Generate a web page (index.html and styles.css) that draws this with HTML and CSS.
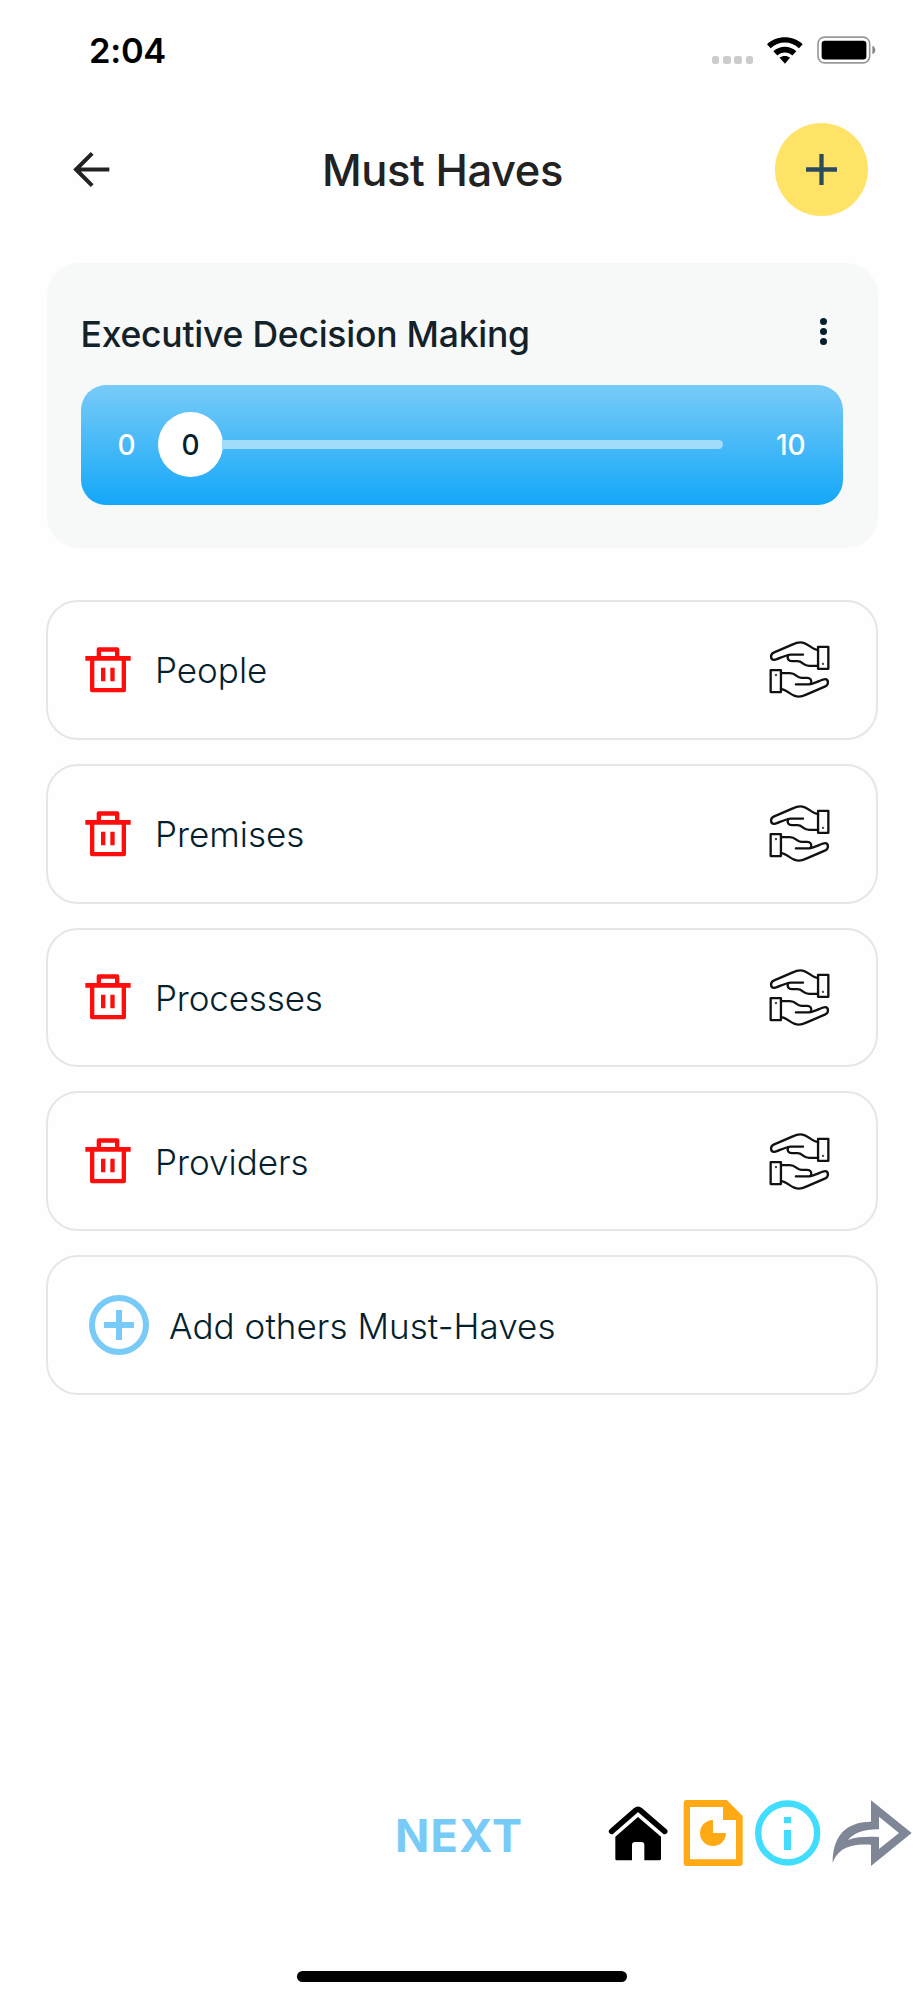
FILE: index.html
```html
<!DOCTYPE html>
<html lang="en">
<head>
<meta charset="utf-8">
<title>Must Haves</title>
<link rel="stylesheet" href="styles.css">
</head>
<body>
<svg width="0" height="0" class="defs" aria-hidden="true">
  <symbol id="trash" viewBox="0 0 138 138">
    <path fill="#ff0d0d" fill-rule="evenodd" d="M35 27V7q0-6 6-6h56q6 0 6 6v20h34v14h-14v89q0 6-6 6H21q-6 0-6-6V41H1V27zM48 27h42V14H48zM28 41v82h82V41zM48 62h13v41H48zM76 62h13v41H76z"/>
  </symbol>
  <symbol id="hands" viewBox="87 150 184 178">
    <g id="hand" fill="none" stroke="#111" stroke-width="7" stroke-linejoin="round" stroke-linecap="round">
      <rect x="235" y="171" width="31" height="66"/>
      <path d="M235 180C214 179 206 157 181 157C173 157 168 159 157 164L101 188C90 193 91 210 102 210C111 210 131 197 151 194H190"/>
      <path d="M145 196C140 207 147 214 156 214H173C189 214 189 228 208 228H235"/>
      <circle cx="250" cy="222" r="1" stroke-width="5"/>
    </g>
    <use href="#hand" transform="rotate(180 179 239)"/>
  </symbol>
</svg>
<div class="screen">
  <header class="status">
    <span class="time">2:04</span>
    <div class="signals">
      <div class="dots"><i></i><i></i><i></i><i></i></div>
      <svg class="wifi" viewBox="262 110 108 80"><path d="M262 131C291 103 340 103 369 131L358 143C334 120 297 120 273 143ZM281 152C300 134 331 134 350 152L338 165C326 153 305 153 293 165ZM300 172C308 165 323 165 331 172L316 190Z"/></svg>
      <svg class="battery" viewBox="412 109 178 84"><rect x="415" y="112" width="156" height="78" rx="20" fill="none" stroke="#999" stroke-width="5"/><rect x="426" y="123" width="135" height="57" rx="10"/><path d="M579 138Q588 142 588 151T579 164Z" fill="#888"/></svg>
    </div>
  </header>
  <nav class="topbar">
    <svg class="back" viewBox="218 454 110 110"><path d="M326 509H230M275 461L227 509L275 557" fill="none" stroke="#222" stroke-width="12"/></svg>
    <h1>Must Haves</h1>
    <button class="add"><svg viewBox="0 0 94 94"><path d="M47 0v94M0 47h94" stroke="#2b4b5d" stroke-width="13"/></svg></button>
  </nav>
  <section class="card">
    <div class="card-head"><h2>Executive Decision Making</h2><div class="kebab"><i></i><i></i><i></i></div></div>
    <div class="slider">
      <span class="min">0</span>
      <div class="rail"><span class="thumb">0</span><span class="track"></span></div>
      <span class="max">10</span>
    </div>
  </section>
  <main class="list">
    <div class="row"><svg class="trash"><use href="#trash"/></svg><span>People</span><svg class="hands"><use href="#hands"/></svg></div>
    <div class="row"><svg class="trash"><use href="#trash"/></svg><span>Premises</span><svg class="hands"><use href="#hands"/></svg></div>
    <div class="row tight"><svg class="trash"><use href="#trash"/></svg><span>Processes</span><svg class="hands"><use href="#hands"/></svg></div>
    <div class="row"><svg class="trash"><use href="#trash"/></svg><span>Providers</span><svg class="hands"><use href="#hands"/></svg></div>
    <div class="row other"><svg class="plus" viewBox="0 0 60 60"><circle cx="30" cy="30" r="27" fill="none" stroke="#78cbf7" stroke-width="6"/><path d="M30 15v30M15 30h30" stroke="#78cbf7" stroke-width="6"/></svg><span>Add others Must-Haves</span></div>
  </main>
  <footer class="bottom">
    <span class="next">NEXT</span>
    <svg class="tools" viewBox="0 0 334 110">
      <g transform="scale(.33333)">
        <path d="M65 154L137 91q7-6 14 0L224 154" fill="none" stroke="#000" stroke-width="17" stroke-linecap="round"/>
        <path d="M76 170L144 111L213 170V236q0 5-5 5H163V195q0-9-9-9h-19q-9 0-9 9v46H80q-4 0-4-5z"/>
        <path fill="#ffa915" fill-rule="evenodd" d="M290 60H410L458 108V248q0 10-10 10H290q-9 0-9-10V70q0-10 9-10zM300 81V238H438V120H399V81z"/>
        <path fill="#ffa915" d="M369 120V159H408A39 39 0 1 1 369 120z"/>
        <circle cx="593" cy="159" r="88.5" fill="none" stroke="#40ddff" stroke-width="19"/>
        <path fill="#40ddff" d="M582 111h21v19h-21zM582 150h21v60h-21z"/>
        <path fill="#7f8696" fill-rule="evenodd" d="M843 61L965 159L843 258V194C790 190 745 200 728 249C728 175 760 126 843 125zM867 110V148C825 147 791 159 774 180C800 170 834 170 867 171V207L927 159z"/>
      </g>
    </svg>
  </footer>
  <div class="home"></div>
</div>
</body>
</html>
```
FILE: styles.css
```css
* { box-sizing: border-box; }
body { margin: 0; background: #fefefe; font-family: Inter, "Liberation Sans", sans-serif; color: #061f2d; }
.defs { position: absolute; }
svg { display: block; flex: none; }
h1, h2 { margin: 0; white-space: nowrap; }
.screen { width: 924px; height: 2000px; display: flex; flex-direction: column; overflow: hidden; }
.status { height: 100px; padding: 0 48px 0 89px; display: flex; justify-content: space-between; }
.time { font-size: 34.5px; letter-spacing: -.3px; font-weight: 600; line-height: 42px; margin-top: 30px; color: #000; }
.signals { display: flex; padding-top: 36px; }
.dots { display: flex; gap: 3.7px; margin: 20px 14px 0 0; }
.dots i { width: 7.5px; height: 7.5px; border-radius: 2.5px; background: #ccc; }
.wifi { width: 36px; height: 27px; margin: 1px 14px 0 0; }
.battery { width: 59px; height: 28px; }
.topbar { height: 164px; display: flex; padding: 23px 55.5px 0 72.5px; justify-content: space-between; }
.back { width: 37px; height: 37px; margin-top: 28px; }
.topbar h1 { font-size: 43.5px; letter-spacing: -.45px; font-weight: 500; line-height: 52px; color: #222; margin: 21px 0 0; }
.add { width: 93px; height: 93px; border: 0; border-radius: 50%; background: #fee366; padding: 31px; }
.add svg { width: 31px; height: 31px; }
.card { margin: -1px 46px 0 46.5px; height: 285px; background: #f7f8f8; border-radius: 32px; padding: 49.5px 35px 0 34px; }
.card-head { height: 72px; display: flex; justify-content: space-between; }
.card h2 { font-size: 35.5px; letter-spacing: -.23px; line-height: 43px; font-weight: 500; color: #132229; }
.kebab { display: flex; flex-direction: column; gap: 3.2px; margin: 5px 16px 0 0; }
.kebab i { width: 7.2px; height: 7.2px; border-radius: 50%; background: #061f2d; }
.slider { height: 120.5px; border-radius: 25px; background: linear-gradient(#78cbf7, #14a7f8); color: #fff; font-size: 28px; font-weight: 500; display: flex; align-items: center; padding-left: 37px; }
.min { width: 40.5px; }
.rail { display: flex; align-items: center; width: 565px; }
.thumb { width: 65px; height: 65px; border-radius: 50%; background: #fff; color: #061f2d; display: flex; align-items: center; justify-content: center; flex: none; }
.track { height: 9px; flex: 1; background: #a2dcfb; border-radius: 0 5px 5px 0; margin-left: -1px; }
.max { margin-left: 53px; }
.list { display: flex; flex-direction: column; gap: 24px; margin: 52px 46px 0; }
.row { height: 139.8px; border: 2px solid #e5e6ea; border-radius: 32px; display: flex; align-items: center; padding: 0 46px 0 37px; font-size: 35px; font-weight: 300; }
.tight { letter-spacing: -.15px; }
.row span { white-space: nowrap; line-height: 44px; padding-top: 1px; }
.trash { width: 46px; height: 46px; margin-right: 24px; }
.hands { width: 61px; height: 59px; margin-left: auto; }
.other { padding-left: 41px; letter-spacing: .05px; }
.plus { width: 60px; height: 60px; margin-right: 20px; }
.bottom { margin-top: 385px; height: 110px; display: flex; padding-left: 395px; justify-content: space-between; }
.next { font-size: 45px; letter-spacing: 1.3px; font-weight: 700; line-height: 54px; margin-top: 29px; color: #78cbf7; }
.tools { width: 334px; height: 110px; }
.home { width: 330px; height: 11px; margin: 81px 0 0 297px; border-radius: 6px; background: #000; }
```
